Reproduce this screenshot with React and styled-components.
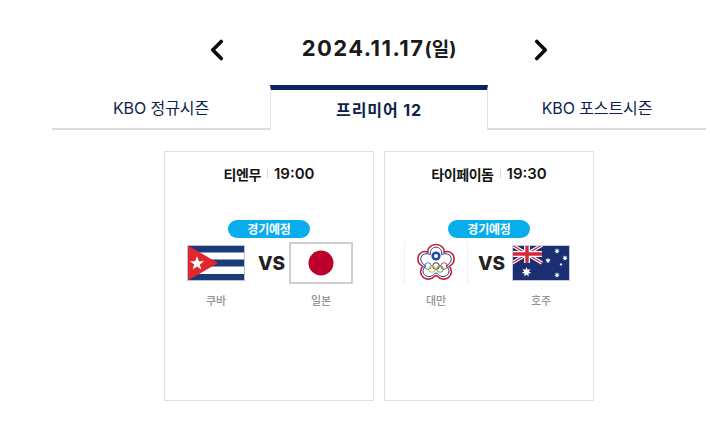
import React from "react";
import styled, { createGlobalStyle } from "styled-components";
import { ChevronLeft, ChevronRight } from "lucide-react";

const GlobalStyle = createGlobalStyle`
    html, body {
        margin: 0;
        padding: 0;
        background: #fff;
        font-family: "Noto Sans CJK KR", "Noto Sans", sans-serif;
    }
`;

const Page = styled.div`
    width: 710px;
    height: 437px;
    padding: 0 4px 0 52px;
    box-sizing: border-box;
    overflow: hidden;
`;

const DateBar = styled.div`
    height: 85px;
    padding-bottom: 15px;
    box-sizing: border-box;
    display: flex;
    align-items: flex-end;
    justify-content: center;
`;

const ArrowButton = styled.button`
    width: 40px;
    height: 40px;
    padding: 0;
    border: 0;
    background: none;
    color: #0a0a0a;
    display: flex;
    align-items: center;
    justify-content: center;
`;

const DateText = styled.h2`
    width: 284px;
    height: 40px;
    margin: 0;
    text-align: center;
    font-size: 22px;
    line-height: 36px;
    font-weight: 700;
    letter-spacing: 1.45px;
    color: #1a1a1a;
    font-family: "Inter", "Noto Sans CJK KR", sans-serif;
`;

const Weekday = styled.span`
    font-size: 19px;
    letter-spacing: 0;
`;

const Tabs = styled.div`
    display: grid;
    grid-template-columns: repeat(3, 218px);
    height: 45px;
`;

const Tab = styled.div`
    box-sizing: border-box;
    display: flex;
    align-items: center;
    justify-content: center;
    padding-bottom: ${(p) => (p.$active ? "3px" : "0")};
    padding-top: ${(p) => (p.$active ? "0" : "1px")};
    font-family: "Inter", "Noto Sans CJK KR", sans-serif;
    font-size: 16px;
    letter-spacing: ${(p) => (p.$active ? "0.9px" : "-0.1px")};
    color: #0f1f4b;
    font-weight: ${(p) => (p.$active ? 700 : 400)};
    border-top: ${(p) => (p.$active ? "5px solid #0c2461" : "0")};
    border-bottom: ${(p) => (p.$active ? "0" : "2px solid #dcdcdc")};
    border-left: ${(p) => (p.$active ? "1px solid #e4e4e4" : "0")};
    border-right: ${(p) => (p.$active ? "1px solid #e4e4e4" : "0")};
`;

const Cards = styled.div`
    display: flex;
    justify-content: center;
    gap: 10px;
    margin-top: 21px;
`;

const Card = styled.article`
    width: 210px;
    height: 250px;
    box-sizing: border-box;
    border: 1px solid #dedede;
    display: flex;
    flex-direction: column;
    align-items: center;
    padding-top: 11px;
`;

const Venue = styled.div`
    height: 21px;
    display: flex;
    align-items: center;
    font-size: 14px;
    font-weight: 700;
    color: #151515;
    letter-spacing: -0.4px;
`;

const Time = styled.span`
    font-family: "Inter", sans-serif;
    font-size: 15px;
    font-weight: 600;
    letter-spacing: 0;
    margin-left: 6px;
    padding-left: 7px;
    position: relative;

    &::before {
        content: "";
        position: absolute;
        left: 0;
        top: 5px;
        width: 1px;
        height: 9px;
        background: #d8d8d8;
    }
`;

const Status = styled.div`
    width: 82px;
    height: 18px;
    margin-top: 36px;
    border-radius: 9px;
    background: #08aeec;
    color: #fff;
    font-size: 12px;
    font-weight: 700;
    line-height: 17px;
    text-align: center;
    letter-spacing: -0.2px;
`;

const Matchup = styled.div`
    width: 100%;
    box-sizing: border-box;
    padding: 4px 20px 0 19px;
    display: grid;
    grid-template-columns: 64px 1fr 64px;
`;

const FlagBox = styled.div`
    height: 42px;
    display: flex;
    align-items: center;
    justify-content: center;
`;

const Versus = styled.div`
    height: 42px;
    padding-left: 6px;
    display: flex;
    align-items: center;
    justify-content: center;
    font-family: "Inter", sans-serif;
    font-size: 19px;
    font-weight: 800;
    color: #222;
`;

const TeamName = styled.div`
    margin-top: 9px;
    text-align: center;
    font-size: 11px;
    line-height: 14px;
    font-weight: 500;
    color: #949494;
`;

const CubaFlag = () => (
    <svg width="58" height="36" viewBox="0 0 58 36">
        <rect width="58" height="36" fill="#fff" />
        <rect y="1" width="58" height="6.5" fill="#1b3a78" />
        <rect y="14.5" width="58" height="7" fill="#1b3a78" />
        <rect y="29" width="58" height="6.5" fill="#1b3a78" />
        <polygon points="0,0 31,18 0,36" fill="#e1262d" />
        <polygon
            points="10,11 11.8,16.2 17.1,16.2 12.8,19.4 14.4,24.6 10,21.4 5.6,24.6 7.2,19.4 2.9,16.2 8.2,16.2"
            fill="#fff"
        />
        <rect x="0.5" y="0.5" width="57" height="35" fill="none" stroke="#b9c4d8" />
    </svg>
);

const JapanFlag = () => (
    <svg width="64" height="42" viewBox="0 0 64 42">
        <rect x="1" y="1" width="62" height="40" fill="#fff" stroke="#cfcfcf" strokeWidth="2" />
        <circle cx="32" cy="21" r="12.5" fill="#bc002d" />
    </svg>
);

const TaipeiLogo = () => (
    <svg width="64" height="42" viewBox="0 0 64 42">
        <path d="M0.5 0V42M63.5 0V42" stroke="#f1f1f1" />
        <g transform="translate(32 21)">
            <path
                d="M0 -18.5C5.5 -18.5 8.6 -14.5 8.2 -10.8C12.2 -12.6 17.5 -10.5 18 -5C18.4 -1 16 2 13.2 3.4C16.2 6.2 16.2 11.6 12.4 14.6C8.6 17.4 3.8 16 1.6 13.2C0.8 12.6 -0.8 12.6 -1.6 13.2C-3.8 16 -8.6 17.4 -12.4 14.6C-16.2 11.6 -16.2 6.2 -13.2 3.4C-16 2 -18.4 -1 -18 -5C-17.5 -10.5 -12.2 -12.6 -8.2 -10.8C-8.6 -14.5 -5.5 -18.5 0 -18.5Z"
                fill="#fff"
                stroke="#c8202f"
                strokeWidth="1.6"
            />
            <path
                d="M0 -15.8C4 -15.8 6.2 -12.4 5.6 -8.4C9.4 -10.4 14.8 -9 15.2 -4.6C15.5 -1.2 13 1.6 10 2.8C13.4 5.2 14 10 10.8 12.4C7.6 14.6 3.6 13.4 1.6 10.6C0.8 10 -0.8 10 -1.6 10.6C-3.6 13.4 -7.6 14.6 -10.8 12.4C-14 10 -13.4 5.2 -10 2.8C-13 1.6 -15.5 -1.2 -15.2 -4.6C-14.8 -9 -9.4 -10.4 -5.6 -8.4C-6.2 -12.4 -4 -15.8 0 -15.8Z"
                fill="none"
                stroke="#1c3f94"
                strokeWidth="1"
            />
            <circle cx="0" cy="-7" r="4.6" fill="#2a4b9b" />
            <circle cx="0" cy="-7" r="2" fill="#fff" />
            <g fill="none" strokeWidth="0.9">
                <circle cx="-8" cy="3" r="3.3" stroke="#3b79c4" />
                <circle cx="0" cy="3" r="3.3" stroke="#222" />
                <circle cx="8" cy="3" r="3.3" stroke="#d6333a" />
                <circle cx="-4" cy="6" r="3.3" stroke="#e9b52e" />
                <circle cx="4" cy="6" r="3.3" stroke="#3aa457" />
            </g>
        </g>
    </svg>
);

const Star = ({ x, y, r }) => {
    const points = [];
    for (let i = 0; i < 14; i++) {
        const radius = i % 2 === 0 ? r : r * 0.5;
        const angle = (Math.PI * i) / 7 - Math.PI / 2;
        points.push(`${x + radius * Math.cos(angle)},${y + radius * Math.sin(angle)}`);
    }
    return <polygon points={points.join(" ")} fill="#fff" />;
};

const AustraliaFlag = () => (
    <svg width="58" height="36" viewBox="0 0 58 36">
        <rect width="58" height="36" fill="#1b2f72" />
        <path d="M0 0L30 18M30 0L0 18" stroke="#fff" strokeWidth="3.6" />
        <path d="M0 0L30 18M30 0L0 18" stroke="#d3283a" strokeWidth="1.3" />
        <path d="M15 0V18M0 9H30" stroke="#fff" strokeWidth="6" />
        <path d="M15 0V18M0 9H30" stroke="#d3283a" strokeWidth="3.4" />
        <Star x={14.5} y={27} r={5} />
        <Star x={45} y={6} r={2.8} />
        <Star x={36} y={15.5} r={2.8} />
        <Star x={53} y={13} r={2.8} />
        <Star x={49} y={19.5} r={1.6} />
        <Star x={45} y={30} r={2.8} />
        <rect x="0.5" y="0.5" width="57" height="35" fill="none" stroke="#c3cbdc" />
    </svg>
);

const games = [
    {
        venue: "티엔무",
        time: "19:00",
        home: { name: "쿠바", Flag: CubaFlag },
        away: { name: "일본", Flag: JapanFlag },
    },
    {
        venue: "타이페이돔",
        time: "19:30",
        home: { name: "대만", Flag: TaipeiLogo },
        away: { name: "호주", Flag: AustraliaFlag },
    },
];

export default function App() {
    return (
        <Page>
            <GlobalStyle />
            <DateBar>
                <ArrowButton aria-label="이전">
                    <ChevronLeft size={34} strokeWidth={2.6} />
                </ArrowButton>
                <DateText>
                    2024.11.17<Weekday>(일)</Weekday>
                </DateText>
                <ArrowButton aria-label="다음">
                    <ChevronRight size={34} strokeWidth={2.6} />
                </ArrowButton>
            </DateBar>
            <Tabs>
                <Tab>KBO 정규시즌</Tab>
                <Tab $active>프리미어 12</Tab>
                <Tab>KBO 포스트시즌</Tab>
            </Tabs>
            <Cards>
                {games.map((game) => (
                    <Card key={game.venue}>
                        <Venue>
                            {game.venue}
                            <Time>{game.time}</Time>
                        </Venue>
                        <Status>경기예정</Status>
                        <Matchup>
                            <div>
                                <FlagBox>
                                    <game.home.Flag />
                                </FlagBox>
                                <TeamName>{game.home.name}</TeamName>
                            </div>
                            <Versus>VS</Versus>
                            <div>
                                <FlagBox>
                                    <game.away.Flag />
                                </FlagBox>
                                <TeamName>{game.away.name}</TeamName>
                            </div>
                        </Matchup>
                    </Card>
                ))}
            </Cards>
        </Page>
    );
}
